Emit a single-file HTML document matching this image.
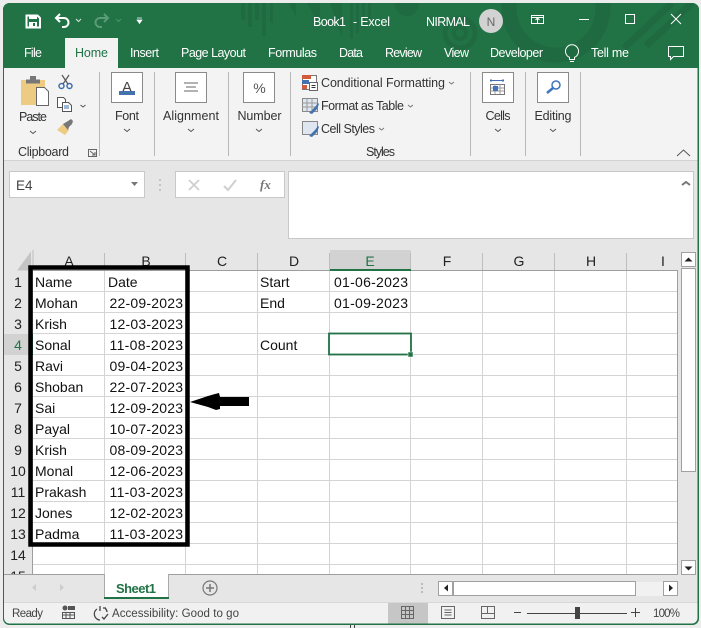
<!DOCTYPE html>
<html><head><meta charset="utf-8"><style>
html,body{margin:0;padding:0;width:701px;height:628px;overflow:hidden;background:#ececec}
svg{display:block}
text{font-family:"Liberation Sans",sans-serif;font-size:12.5px;fill:#333}
.tab{fill:#fff;font-size:12.5px}
.c{font-size:14px;fill:#111}
.h{font-size:14px;fill:#222;text-anchor:middle}
.r{font-size:14px;fill:#222;text-anchor:middle}
.m{text-anchor:middle}
.b{fill:#fff;stroke:#8a8a8a;stroke-width:1}
</style></head><body>
<svg width="701" height="628" viewBox="0 0 701 628" xmlns="http://www.w3.org/2000/svg">
<defs><clipPath id="tb"><path d="M3 68V10a7 7 0 0 1 7-7H692a7 7 0 0 1 7 7V68Z"/></clipPath></defs>
<rect width="701" height="628" fill="#ececec"/>
<rect x="3.500" y="3.500" width="695" height="621" rx="6" fill="#e6e6e6" stroke="#217346"/>
<path d="M3 68V10a7 7 0 0 1 7-7H692a7 7 0 0 1 7 7V68Z" fill="#217346"/>
<!-- title decoration -->
<g clip-path="url(#tb)">
<g fill="#1f6a41">
<rect x="241" y="3" width="4" height="17"/><rect x="248" y="3" width="4" height="24"/><rect x="255" y="3" width="4" height="17"/><rect x="262" y="3" width="4" height="33"/><rect x="270" y="3" width="3" height="20"/>
<path d="M289 3h7v14ZM307 3h13v24ZM330 3h12v35ZM350 3h3v36h-3ZM356 3h3v30h-3ZM362 3h3v24h-3ZM368 3h3v16h-3Z"/>
<circle cx="407" cy="4" r="12"/>
</g>
<g fill="none" stroke="#1f6a41">
<circle cx="460" cy="33" r="15" stroke-width="5"/>
<circle cx="460" cy="33" r="6" stroke-width="4"/>
<circle cx="556" cy="8" r="47" stroke-width="15"/>
<path d="M624 48L672 3M646 46L692 3" stroke-width="7"/>
</g>
</g>
<!-- QAT -->
<path d="M26.500 15.500h11l2.500 2.500v9.500h-13.500Z" fill="none" stroke="#fff" stroke-width="2"/>
<rect x="29" y="15" width="8" height="4" fill="#fff"/><rect x="29" y="22" width="8" height="5" fill="#fff"/><rect x="33" y="23" width="2" height="3" fill="#217346"/>
<path d="M60 14l-4 4 4 4M56 18h8a4.500 4.500 0 0 1 0 9h-2" fill="none" stroke="#fff" stroke-width="2"/>
<path d="M76 19l2.500 2.500 2.500-2.500" fill="none" stroke="#d8e8de" stroke-width="1"/>
<path d="M104 14l4 4-4 4M108 18h-8a4.500 4.500 0 0 0 0 9h2" fill="none" stroke="#5a9b78" stroke-width="2"/>
<path d="M116 19l2.500 2.500 2.500-2.500" fill="none" stroke="#4c9069" stroke-width="1"/>
<path d="M137 18h5M137 20h5l-2.500 3.500Z" fill="#fff" stroke="#fff" stroke-width=".7"/>
<text x="313" y="26" style="fill:#fff" textLength="33">Book1</text>
<text x="353" y="26" style="fill:#fff" textLength="37">-  Excel</text>
<text x="426" y="26" style="fill:#fff" textLength="44">NIRMAL</text>
<circle cx="491" cy="21" r="12" fill="#d2d2d2"/>
<text x="491" y="26" class="m" style="fill:#666;font-size:12px">N</text>
<!-- window controls -->
<g fill="none" stroke="#fff">
<path d="M531.500 15.500h12v8h-12ZM531.500 17.500h12"/><path d="M537.500 23v-5M535.500 20l2-2 2 2"/>
<path d="M579 19.500h10"/><rect x="625.500" y="14.500" width="9" height="9"/><path d="M671 14l10 10M681 14l-10 10"/>
</g>
<!-- tabs -->
<rect x="65" y="38" width="53" height="30" fill="#f3f3f3"/>
<text x="24" y="57" class="tab" style="fill:#fff" textLength="18">File</text>
<text x="75" y="57" style="fill:#217346" textLength="33">Home</text>
<text x="130" y="57" class="tab" textLength="29">Insert</text>
<text x="181" y="57" class="tab" textLength="65">Page Layout</text>
<text x="268" y="57" class="tab" textLength="49">Formulas</text>
<text x="339" y="57" class="tab" textLength="24">Data</text>
<text x="385" y="57" class="tab" textLength="37">Review</text>
<text x="444" y="57" class="tab" textLength="25">View</text>
<text x="490" y="57" class="tab" textLength="53">Developer</text>
<text x="591" y="57" class="tab" textLength="38">Tell me</text>
<path d="M569.500 57.300a6.500 6.500 0 1 1 5 0v2.200h-5ZM570 61.500h4" fill="none" stroke="#fff"/>
<path d="M668.500 46.500h15v10h-10l-3 3v-3h-2Z" fill="none" stroke="#fff"/>
<!-- ribbon -->
<rect x="4" y="68" width="694" height="92" fill="#f3f3f3"/>
<rect x="4" y="160" width="694" height="1" fill="#d2d2d2"/>
<g stroke="#b8b8b8"><path d="M99.500 72v84M154.500 72v84M228.500 72v84M290.500 72v84M470.500 72v84M525.500 72v84M580.500 72v84"/></g>
<!-- clipboard -->
<path d="M21 80h24v25H21Z" fill="#eecb83"/><path d="M26 79.500h14v4H26Z" fill="#777"/><rect x="30" y="76" width="6" height="4" fill="#777"/>
<path d="M36.500 87.500h8l4 4v14H36.500Z" fill="#fff" stroke="#666"/>
<g fill="none" stroke="#3f6fae" stroke-width="1.500"><circle cx="61.500" cy="86" r="2.500"/><circle cx="69.500" cy="86" r="2.500"/></g>
<path d="M63 84l6-9M68 84l-6-9" stroke="#555" stroke-width="1.200"/>
<path d="M57.500 97.500h6l2 2v8h-8Z" fill="#fff" stroke="#555"/>
<path d="M62.500 102.500h6l3 3v6h-9Z" fill="#fff" stroke="#555"/><path d="M64 106h5M64 108h5" stroke="#3f6fae"/>
<path d="M80.500 105l2.500 2 2.500-2" fill="none" stroke="#555"/>
<path d="M57 130l6-6 6 6-4 5Z" fill="#eecb83"/><path d="M63 124l5-3 3-2 2 2-1 3-3 3-1 3Z" fill="#777"/>
<text x="33" y="121" class="m" textLength="28">Paste</text>
<path d="M30 131l3 2.500 3-2.500" fill="none" stroke="#555"/>
<text x="18" y="156" textLength="51">Clipboard</text>
<path d="M88.500 149.500h8v7h-8ZM90 151l5 4M95 152v3h-3" fill="none" stroke="#666"/>
<!-- big buttons -->
<rect class="b" x="111.500" y="72.500" width="31" height="30"/>
<text x="127" y="92" class="m" style="font-size:15px;fill:#444">A</text><rect x="119" y="91" width="16" height="4" fill="#4472ae"/>
<text x="127" y="120" class="m" textLength="24">Font</text><path d="M124 129l3 2.500 3-2.500" fill="none" stroke="#555"/>
<rect class="b" x="175.500" y="72.500" width="31" height="30"/>
<path d="M184 83h14M186 87h10M184 91h14" stroke="#666"/>
<text x="191" y="120" class="m" textLength="56">Alignment</text><path d="M188 129l3 2.500 3-2.500" fill="none" stroke="#555"/>
<rect class="b" x="243.500" y="72.500" width="31" height="30"/>
<text x="259.500" y="93" class="m" style="font-size:14px;fill:#555">%</text>
<text x="259.500" y="120" class="m" textLength="44">Number</text><path d="M256 129l3 2.500 3-2.500" fill="none" stroke="#555"/>
<!-- styles -->
<rect x="302.500" y="75.500" width="14" height="14" fill="#fff" stroke="#777"/><rect x="302" y="75" width="9" height="4" fill="#d25b3a"/><rect x="302" y="80" width="7" height="4" fill="#4472ae"/><rect x="302" y="85" width="5" height="4" fill="#d25b3a"/>
<rect x="309.500" y="82.500" width="8" height="8" fill="#fff" stroke="#666"/><path d="M311.500 85.500h4M311.500 87.500h4" stroke="#333"/>
<rect x="302.500" y="98.500" width="15" height="13" fill="#dfe6f0" stroke="#888"/><path d="M302 103h15M302 107h15M307 98v13M312 98v13" stroke="#999"/><path d="M309 113l6-6 3-4 1 1-2 5-5 5Z" fill="#4472ae"/>
<text x="321" y="110" textLength="83">Format as Table</text><path d="M408 105l2.500 2 2.500-2" fill="none" stroke="#777"/>
<text x="321" y="87" textLength="124">Conditional Formatting</text><path d="M449 82l2.500 2 2.500-2" fill="none" stroke="#777"/>
<rect x="302.500" y="121.500" width="15" height="13" fill="#dfe6f0" stroke="#888"/><path d="M309 136l6-6 3-4 1 1-2 5-5 5Z" fill="#4472ae"/>
<text x="321" y="133" textLength="54">Cell Styles</text><path d="M379 128l2.500 2 2.500-2" fill="none" stroke="#777"/>
<text x="366" y="156" textLength="29">Styles</text>
<!-- cells editing -->
<rect class="b" x="482.500" y="72.500" width="31" height="30"/>
<path d="M490 80.500h14M491 79v3M503 79v3" stroke="#4472ae"/>
<rect x="490.500" y="84.500" width="14" height="10" fill="#fff" stroke="#777"/><path d="M490 88h14M490 91h14M495 84v10M500 84v10" stroke="#999"/><rect x="493" y="86" width="5" height="5" fill="#3f74bf"/>
<text x="498" y="120" class="m" textLength="25">Cells</text><path d="M495 129l3 2.500 3-2.500" fill="none" stroke="#555"/>
<rect class="b" x="537.500" y="72.500" width="31" height="30"/>
<circle cx="556" cy="85" r="4" fill="#fff" stroke="#3f74bf" stroke-width="1.500"/><path d="M553 88l-6 5" stroke="#3f74bf" stroke-width="2.500"/>
<text x="553" y="120" class="m" textLength="37">Editing</text><path d="M550 129l3 2.500 3-2.500" fill="none" stroke="#555"/>
<path d="M677 156l6.500-6 6.500 6" fill="none" stroke="#555"/>
<!-- formula bar -->
<rect x="9.500" y="171.500" width="135" height="26" fill="#fff" stroke="#c8c8c8"/>
<text x="16" y="190" style="font-size:13.500px;fill:#444">E4</text>
<path d="M131 182h7l-3.500 4Z" fill="#777"/>
<path d="M160 179v2M160 184v2M160 189v2" stroke="#bbb" stroke-width="1.500"/>
<rect x="175.500" y="171.500" width="109" height="26" fill="#fff" stroke="#c8c8c8"/>
<path d="M189 180l10 10M199 180l-10 10" stroke="#cfcfcf" stroke-width="1.800"/>
<path d="M224 186l4 4 8-10" fill="none" stroke="#cfcfcf" stroke-width="2"/>
<text x="260" y="189" style="font-family:'Liberation Serif',serif;font-style:italic;font-size:13px;fill:#777;font-weight:bold">fx</text>
<rect x="288.500" y="171.500" width="405" height="67" fill="#fff" stroke="#c8c8c8"/>
<path d="M682 185l4-3 4 3" fill="none" stroke="#777" stroke-width="2"/>
<!-- grid -->
<rect x="4" y="250" width="674" height="21" fill="#e6e6e6"/>
<rect x="33" y="271" width="645" height="303" fill="#fff"/>
<rect x="4" y="271" width="29" height="303" fill="#e6e6e6"/>
<rect x="330" y="250" width="81" height="21" fill="#d2d2d2"/>
<rect x="4" y="334" width="28" height="21" fill="#d2d2d2"/>
<path d="M31 250l-14 19h14Z" fill="#c4c4c4" transform="translate(0 1.500)"/>
<g stroke="#d4d4d4"><path d="M33 291.500H677.500M33 312.500H677.500M33 333.500H677.500M33 354.500H677.500M33 375.500H677.500M33 396.500H677.500M33 417.500H677.500M33 438.500H677.500M33 459.500H677.500M33 480.500H677.500M33 501.500H677.500M33 522.500H677.500M33 543.500H677.500M33 564.500H677.500"/>
<path d="M104.500 271v303M185.500 271v303M257.500 271v303M329.500 271v303M410.500 271v303M482.500 271v303M554.500 271v303M626.500 271v303"/></g>
<g stroke="#bdbdbd"><path d="M33 250v21M104.500 253v18M185.500 253v18M257.500 253v18M329.500 253v18M410.500 253v18M482.500 253v18M554.500 253v18M626.500 253v18"/></g>
<path d="M33 270.500H330M411 270.500H677.500V574.500H4" fill="none" stroke="#9e9e9e"/>
<path d="M32.500 271V574" stroke="#9e9e9e"/>
<rect x="330" y="269" width="81" height="2" fill="#217346"/>
<rect x="31" y="334" width="2" height="21" fill="#217346"/>
<text class="h" x="69" y="266">A</text><text class="h" x="146" y="266">B</text><text class="h" x="222" y="266">C</text><text class="h" x="294" y="266">D</text><text class="h" x="370" y="266" style="fill:#217346">E</text><text class="h" x="447" y="266">F</text><text class="h" x="519" y="266">G</text><text class="h" x="591" y="266">H</text><text class="h" x="663" y="266">I</text>
<text class="r" x="18" y="287">1</text><text class="r" x="18" y="308">2</text><text class="r" x="18" y="329">3</text><text class="r" x="18" y="350" style="fill:#217346">4</text><text class="r" x="18" y="371">5</text><text class="r" x="18" y="392">6</text><text class="r" x="18" y="413">7</text><text class="r" x="18" y="434">8</text><text class="r" x="18" y="455">9</text><text class="r" x="18" y="476">10</text><text class="r" x="18" y="497">11</text><text class="r" x="18" y="518">12</text><text class="r" x="18" y="539">13</text><text class="r" x="18" y="560">14</text>
<svg x="4" y="565" width="29" height="9" viewBox="4 565 29 9"><text class="r" x="18" y="581">15</text></svg>
<!-- cells -->
<text class="c" x="35" y="287">Name</text><text class="c" x="108" y="287">Date</text>
<text class="c" x="35" y="308">Mohan</text><text class="c" x="109.500" y="308" textLength="73.500">22-09-2023</text>
<text class="c" x="35" y="329">Krish</text><text class="c" x="109.500" y="329" textLength="73.500">12-03-2023</text>
<text class="c" x="35" y="350">Sonal</text><text class="c" x="109.500" y="350" textLength="73.500">11-08-2023</text>
<text class="c" x="35" y="371">Ravi</text><text class="c" x="109.500" y="371" textLength="73.500">09-04-2023</text>
<text class="c" x="35" y="392">Shoban</text><text class="c" x="109.500" y="392" textLength="73.500">22-07-2023</text>
<text class="c" x="35" y="413">Sai</text><text class="c" x="109.500" y="413" textLength="73.500">12-09-2023</text>
<text class="c" x="35" y="434">Payal</text><text class="c" x="109.500" y="434" textLength="73.500">10-07-2023</text>
<text class="c" x="35" y="455">Krish</text><text class="c" x="109.500" y="455" textLength="73.500">08-09-2023</text>
<text class="c" x="35" y="476">Monal</text><text class="c" x="109.500" y="476" textLength="73.500">12-06-2023</text>
<text class="c" x="35" y="497">Prakash</text><text class="c" x="109.500" y="497" textLength="73.500">11-03-2023</text>
<text class="c" x="35" y="518">Jones</text><text class="c" x="109.500" y="518" textLength="73.500">12-02-2023</text>
<text class="c" x="35" y="539">Padma</text><text class="c" x="109.500" y="539" textLength="73.500">11-03-2023</text>
<text class="c" x="260" y="287">Start</text><text class="c" x="334" y="287" textLength="74">01-06-2023</text>
<text class="c" x="260" y="308">End</text><text class="c" x="334" y="308" textLength="74">01-09-2023</text>
<text class="c" x="260" y="350">Count</text>
<!-- selection -->
<rect x="329" y="333.500" width="82" height="21" fill="none" stroke="#217346" stroke-width="1.800"/>
<rect x="408" y="352" width="5" height="5" fill="#217346" stroke="#fff" stroke-width=".5"/>
<!-- black box + arrow -->
<rect x="30.500" y="267.500" width="157" height="277" fill="none" stroke="#000" stroke-width="4.500"/>
<path d="M190 402L208 396 215 394 219 393 220 397H249V406H220L220 409 216 410 208 407Z" fill="#000"/>
<!-- vscroll -->
<rect x="679" y="250" width="19" height="325" fill="#e6e6e6"/>
<rect x="681.500" y="252.500" width="14" height="14" fill="#fff" stroke="#a0a0a0"/><path d="M684.500 261.500h8l-4-4Z" fill="#222"/>
<rect x="681.500" y="268.500" width="14" height="203" fill="#fff" stroke="#a0a0a0"/>
<rect x="681.500" y="560.500" width="14" height="14" fill="#fff" stroke="#a0a0a0"/><path d="M684.500 566.500h8l-4 4Z" fill="#222"/>
<!-- sheet tabs -->
<rect x="4" y="575" width="694" height="28" fill="#e6e6e6"/>
<rect x="104.500" y="574" width="64" height="24" fill="#fff"/>
<path d="M104.500 574v23M168.500 574v23" stroke="#aaa"/>
<rect x="104" y="597" width="65" height="2" fill="#217346"/>
<text x="116" y="593" style="font-weight:bold;font-size:13px;fill:#217346" textLength="40">Sheet1</text>
<circle cx="210" cy="588" r="7" fill="none" stroke="#777" stroke-width="1.200"/><path d="M206 588h8M210 584v8" stroke="#777" stroke-width="1.500"/>
<path d="M36 584l-4 3.500 4 3.500ZM60 584l4 3.500-4 3.500Z" fill="#cdcdcd"/>
<path d="M422 583v2M422 587v2M422 591v2" stroke="#bbb" stroke-width="2"/>
<rect x="438.500" y="581.500" width="14" height="14" fill="#fff" stroke="#a0a0a0"/><path d="M448 584.500v7l-4-3.500Z" fill="#222"/>
<rect x="453.500" y="581.500" width="182" height="14" fill="#fff" stroke="#a0a0a0"/>
<rect x="636" y="582" width="27" height="14" fill="#f1f1f1"/>
<rect x="663.500" y="581.500" width="14" height="14" fill="#fff" stroke="#a0a0a0"/><path d="M669 584.500v7l4-3.500Z" fill="#222"/>
<!-- status -->
<path d="M4 603H698V618a6 6 0 0 1-6 6H10a6 6 0 0 1-6-6Z" fill="#f1f1f1"/>
<path d="M4 602.500H698" stroke="#d8d8d8"/>
<rect x="388" y="603" width="40" height="21" fill="#c6c6c6"/>
<text x="12" y="617" style="font-size:11.500px;fill:#444" textLength="31">Ready</text>
<circle cx="65" cy="608" r="2.500" fill="#555"/><rect x="68" y="606" width="7" height="4" fill="#555"/><path d="M62.500 612.500h12v6h-12ZM62 615h13M66 612v6M70 612v6" fill="none" stroke="#555"/>
<path d="M97 609a6 6 0 0 0 3 11M105 608a6 6 0 0 1 2 4M100 606v5M103 608h3M102 617l2 2 4-5" fill="none" stroke="#444" stroke-width="1.300"/>
<text x="112" y="617" style="font-size:11.500px;fill:#444" textLength="127">Accessibility: Good to go</text>
<g fill="none" stroke="#666"><path d="M401.500 606.500h12v12h-12ZM401 610.500h13M401 614.500h13M405.500 606v13M409.500 606v13"/>
<path d="M441.500 606.500h13v12h-13ZM444.500 610h7M444.500 612.500h7M444.500 615h7"/>
<path d="M481.500 606.500h13v12h-13ZM481 613.500h13M487.500 606v7"/></g>
<path d="M514 612.500h7M527 613.500h100M631 612.500h9M635.500 608v9" stroke="#444"/>
<rect x="575" y="607" width="5" height="12" fill="#444"/>
<text x="653" y="617" style="font-size:11.500px;fill:#444" textLength="27">100%</text>
<!-- bottom stub -->
<path d="M350.500 625v3M354.500 625v3" stroke="#444"/>
<path d="M3.500 68V618a6 6 0 0 0 6 6H692a6 6 0 0 0 6-6V68" fill="none" stroke="#217346"/>
</svg>
</body></html>
